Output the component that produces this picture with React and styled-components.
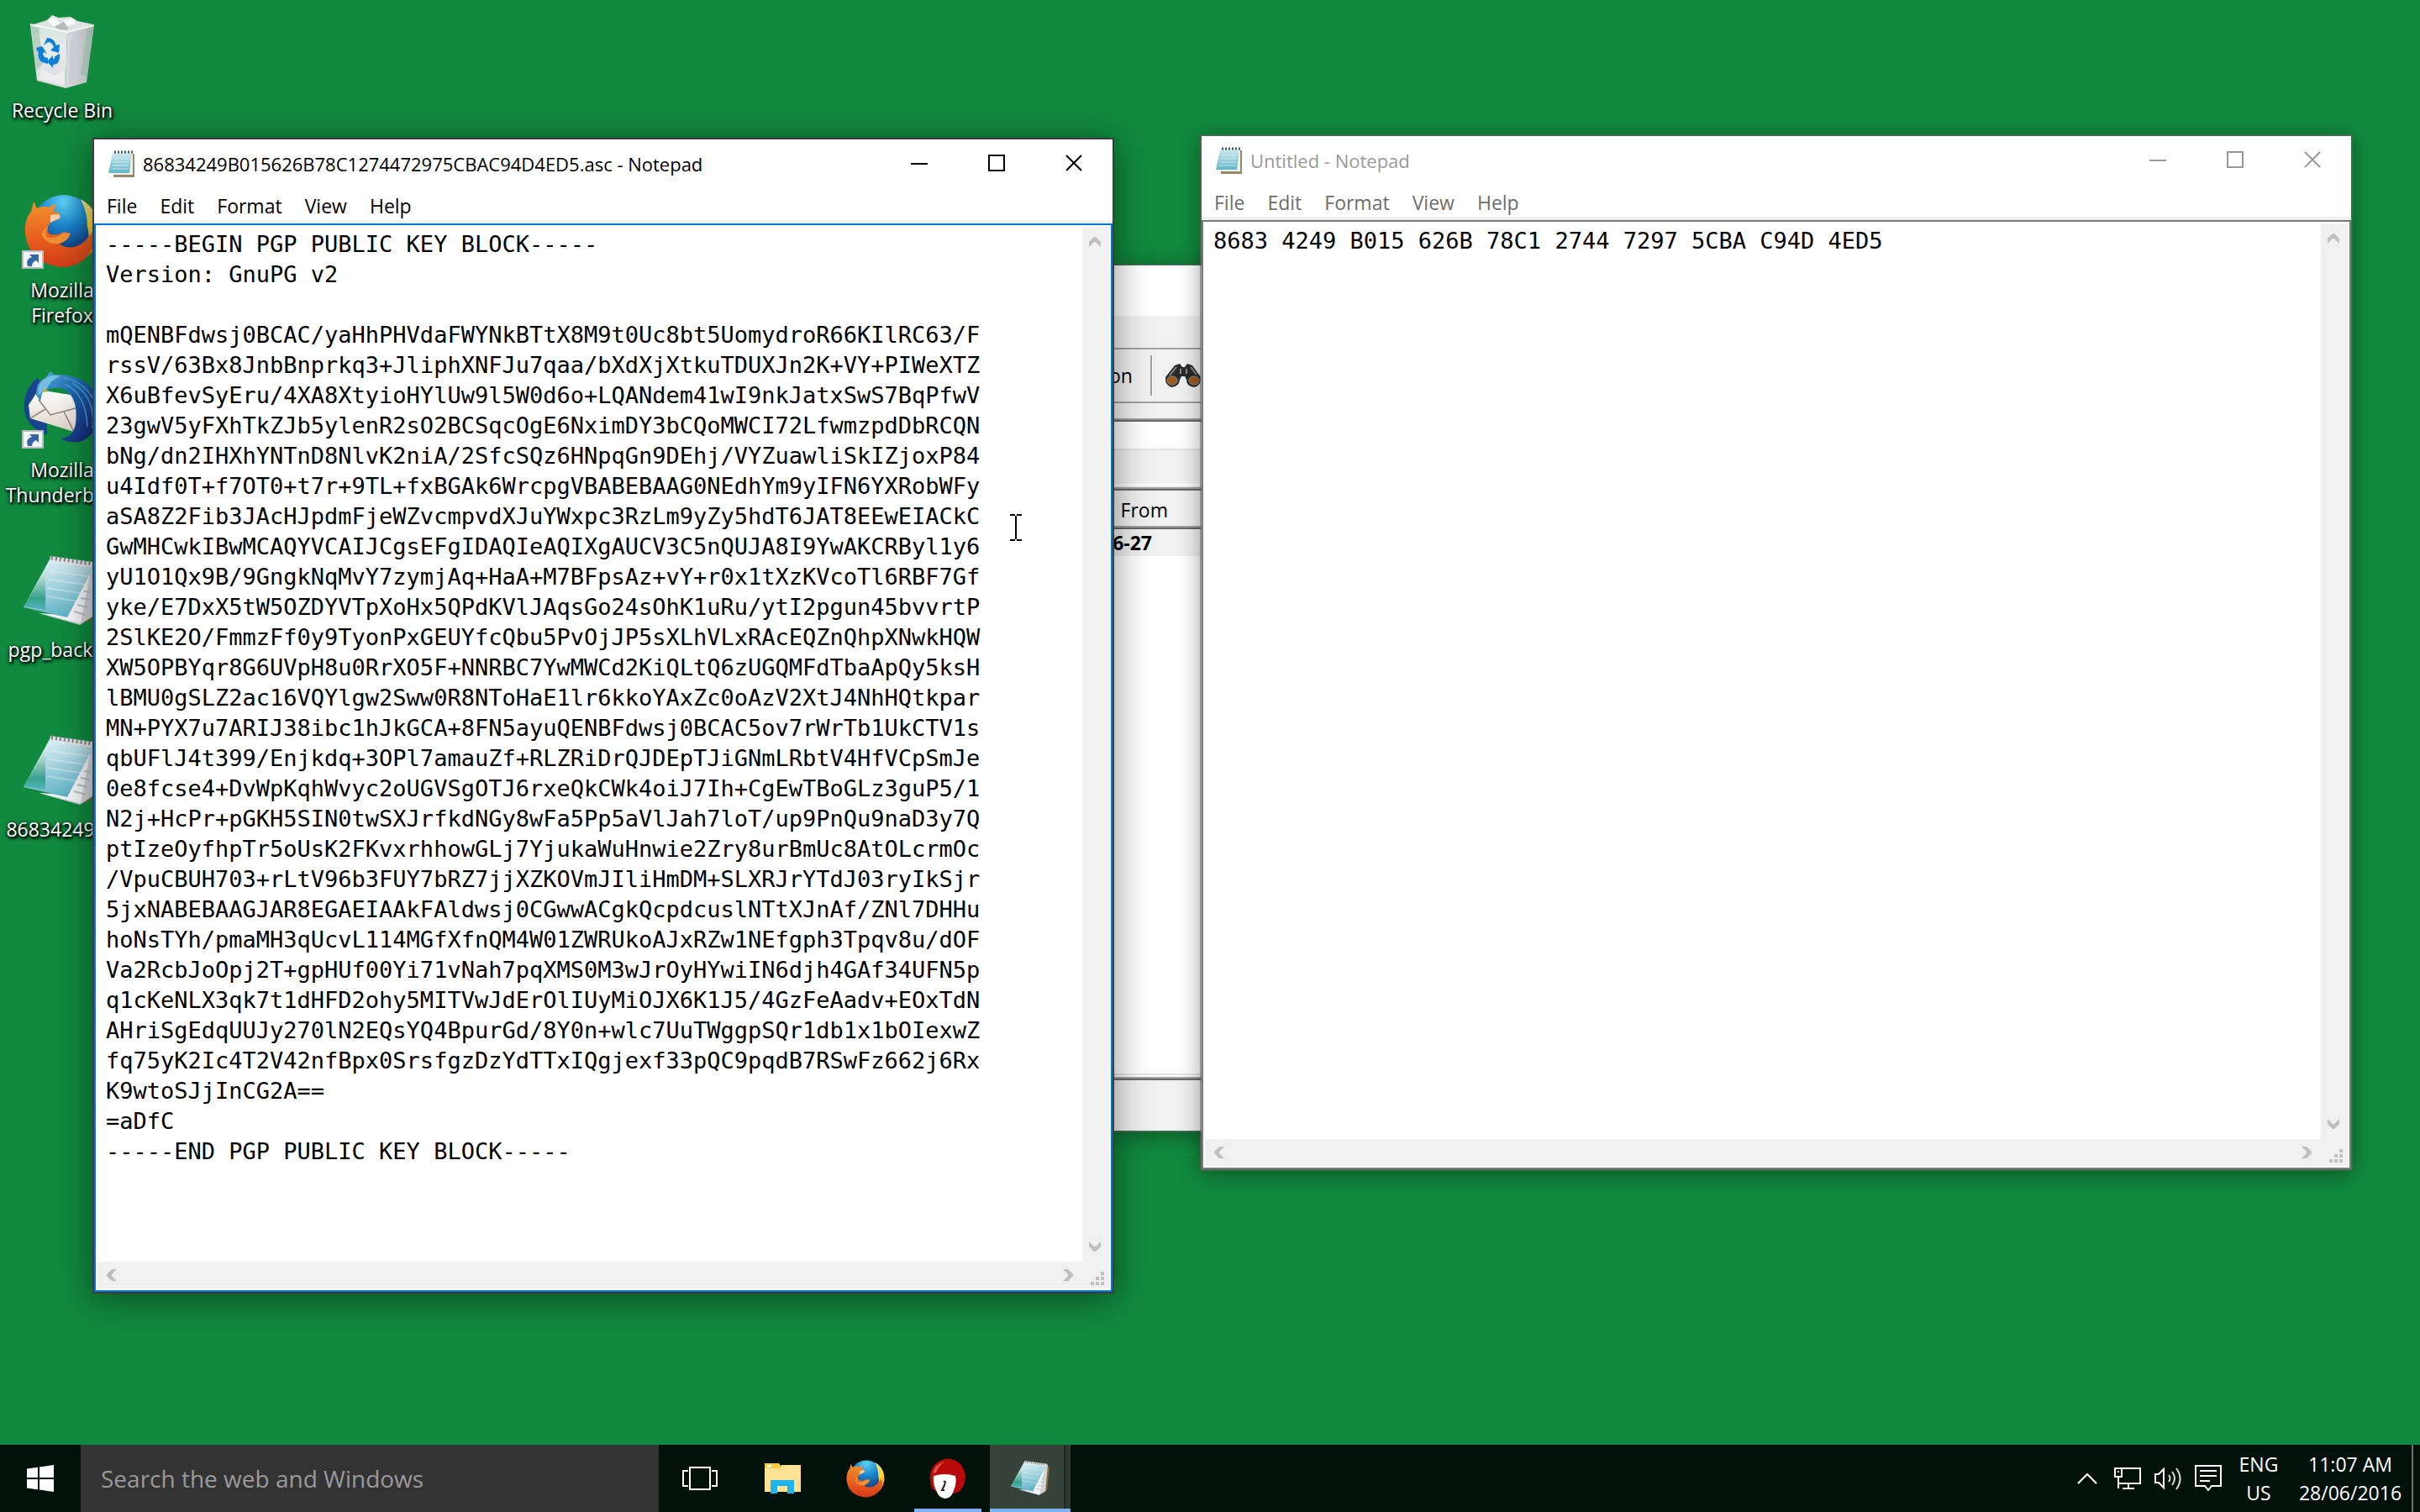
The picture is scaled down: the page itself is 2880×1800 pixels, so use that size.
import React from "react";
import styled, { createGlobalStyle, css } from "styled-components";

const ui = '"Open Sans", "Noto Sans", sans-serif';
const mono = '"DejaVu Sans Mono", "Liberation Mono", monospace';

const GlobalStyle = createGlobalStyle`
  *, *::before, *::after { box-sizing: border-box; }
  html, body { margin: 0; height: 100%; }
  body { font-family: ${ui}; font-size: 23px; color: #000; }
  button, input, textarea { font: inherit; color: inherit; margin: 0; border: 0; padding: 0; border-radius: 0; background: none; }
  button { display: flex; align-items: center; justify-content: center; cursor: default; }
  svg { display: block; flex: none; }
`;

const Screen = styled.div`
  display: flex;
  flex-direction: column;
  min-height: 100vh;
  background: #11893e;
`;

const Desktop = styled.main`
  position: relative;
  flex: 1;
  overflow: hidden;
`;

const IconColumn = styled.ul`
  display: grid;
  grid-auto-rows: 214px;
  width: 148px;
  margin: 0;
  padding: 14px 0 0;
  list-style: none;
`;

const ShortcutButton = styled.button`
  flex-direction: column;
  justify-content: flex-start;
  width: 100%;
  gap: 6px;
`;

const ShortcutLabel = styled.span`
  color: #fff;
  line-height: 30px;
  text-align: center;
  text-shadow: 2px 2px 3px #000, 0 2px 4px #000, 0 0 3px rgba(0, 0, 0, 0.6);
`;

/* ---------- windows ---------- */

const Frame = styled.section`
  position: absolute;
  left: ${(p) => p.$x}px;
  top: ${(p) => p.$y}px;
  width: ${(p) => p.$w}px;
  height: ${(p) => p.$h}px;
  display: flex;
  flex-direction: column;
  background: #fff;
  background-clip: padding-box;
  border: 2px solid ${(p) => (p.$active ? "#3c3c40" : "rgba(96, 96, 96, 0.6)")};
  box-shadow: ${(p) =>
    p.$active ? "0 6px 40px rgba(0, 0, 0, 0.45)" : "0 4px 24px rgba(0, 0, 0, 0.36)"};
`;

const TitleBar = styled.header`
  display: flex;
  align-items: center;
  height: 58px;
  padding-left: 16px;
  gap: 10px;
  color: ${(p) => (p.$active ? "#000" : "#999")};
`;

const Title = styled.h1`
  flex: 1;
  margin: 0;
  font-size: 22px;
  font-weight: 400;
  white-space: nowrap;
`;

const Caption = styled.div`
  display: flex;
  align-self: stretch;
`;

const CaptionButton = styled.button`
  width: 92px;
  height: 56px;
`;

const MenuBar = styled.nav`
  display: flex;
  align-items: center;
  height: 38px;
  padding-left: 2px;
  color: ${(p) => (p.$active ? "#000" : "#6d6d6d")};
`;

const MenuButton = styled.button`
  padding: 4px 14px 0 13px;
  height: 38px;
`;

const EditArea = styled.div`
  flex: 1;
  min-height: 0;
  display: grid;
  grid-template: 1fr 32px / 1fr 32px;
  margin-top: 4px;
  padding: 2px;
  border: 2px solid ${(p) => (p.$active ? "#0078d7" : "#7a7a7a")};
  box-shadow: 0 -4px 0 #f0f0f0;
`;

const TextBox = styled.textarea`
  display: block;
  width: 100%;
  height: 100%;
  padding: 3px 10px;
  resize: none;
  outline: none;
  overflow: hidden;
  white-space: pre;
  font-family: ${mono};
  font-size: 27px;
  line-height: 36px;
  color: #000;
`;

const ScrollBar = styled.div`
  display: flex;
  flex-direction: ${(p) => (p.$vertical ? "column" : "row")};
  justify-content: space-between;
  background: #f0f0f0;
`;

const ScrollButton = styled.button`
  ${(p) =>
    p.$vertical
      ? css`
          width: 30px;
          height: 36px;
        `
      : css`
          width: 34px;
          height: 32px;
        `}
`;

const Corner = styled.div`
  display: flex;
  align-items: flex-end;
  justify-content: flex-end;
  padding: 4px 6px;
  background: #f0f0f0;
`;

/* ---------- key manager window ---------- */

const Strip = styled.div`
  display: flex;
  align-items: center;
  justify-content: flex-end;
  height: ${(p) => p.$h}px;
  background: ${(p) => p.$bg || "#f0f0f0"};
  border-bottom: ${(p) => (p.$edge ? "2px solid " + p.$edge : "0")};
  font-size: 23px;
  font-weight: ${(p) => (p.$bold ? 700 : 400)};
  padding-top: ${(p) => p.$drop || 0}px;
  padding-right: ${(p) => p.$pad || 0}px;
`;

const Groove = styled.div`
  height: 4px;
  border-top: 2px solid #a0a0a0;
  border-bottom: 2px solid #696969;
`;

const Filler = styled.div`
  flex: 1;
  border-bottom: 2px solid #e3e3e3;
  margin-bottom: 2px;
`;

const Divider = styled.span`
  width: 4px;
  height: 48px;
  margin: 0 14px 0 21px;
  background: #fff;
  border-left: 2px solid #a0a0a0;
`;

const Pointer = styled.svg`
  position: absolute;
  left: 1202px;
  top: 612px;
`;

/* ---------- taskbar ---------- */

const TaskBar = styled.footer`
  display: flex;
  height: 80px;
  background: #02120a;
  color: #fff;
`;

const StartButton = styled.button`
  width: 96px;
`;

const SearchBox = styled.input`
  width: 688px;
  padding: 0 24px;
  background: #333;
  font-size: 28px;
  outline: none;
  &::placeholder {
    color: #9a9a9a;
    opacity: 1;
  }
`;

const TaskButton = styled.button`
  position: relative;
  width: ${(p) => (p.$view ? 98 : 96)}px;
  margin-right: 2px;
  background: ${(p) => (p.$active ? "linear-gradient(90deg, #36433b 88px, #1b2a21 88px, #1b2a21 90px, #2b3930 90px)" : "none")};
  ${(p) =>
    (p.$active || p.$running) &&
    css`
      &::after {
        content: "";
        position: absolute;
        bottom: 0;
        left: ${p.$active ? 0 : 8}px;
        right: ${p.$active ? 0 : 8}px;
        height: 4px;
        background: #7ab4f6;
      }
    `}
`;

const Tray = styled.div`
  display: flex;
  align-items: stretch;
  margin-left: auto;
`;

const TrayButton = styled.button`
  width: 48px;
`;

const TrayText = styled.button`
  flex-direction: column;
  width: ${(p) => p.$w}px;
  line-height: 34px;
`;

const ShowDesktop = styled.button`
  width: 10px;
  border-left: 2px solid #67716b;
`;

/* ---------- drawings ---------- */

const RecycleBinIcon = () => (
  <svg width="96" height="96" viewBox="0 -2 96 96">
    <defs>
      <linearGradient id="binL" x1="0" y1="0" x2="0" y2="1">
        <stop offset="0" stopColor="#d4e2da" />
        <stop offset=".4" stopColor="#e9ecee" />
        <stop offset="1" stopColor="#d7d9db" />
      </linearGradient>
      <linearGradient id="binR" x1="0" y1="0" x2="1" y2="0">
        <stop offset="0" stopColor="#d9dbde" />
        <stop offset="1" stopColor="#aeb4b6" />
      </linearGradient>
    </defs>
    <path d="M11 14 L30 8 L36 2 L44 5 L58 4 L66 9 L85 13 L54 22 Z" fill="#dfe2e3" />
    <path d="M30 8 L38 4 L46 12 L40 18 Z M50 8 L62 6 L64 12 L52 16 Z" fill="#f7f8f8" />
    <path d="M38 16 L50 10 L56 18 L48 22 Z" fill="#b6bcbc" />
    <path d="M10 13 L54 22 L52 89 L18 80 Z" fill="url(#binL)" />
    <path d="M54 22 L86 14 L77 82 L52 89 Z" fill="url(#binR)" />
    <path d="M11 15 L20 17 L25 60 L17 68 Z M85 15 L78 18 L70 72 L78 76 Z" fill="#8ab89c" opacity=".5" />
    <path d="M58 30 L72 44 L62 58 L70 74 L56 84 Z" fill="#c6cacd" opacity=".7" />
    <path d="M24 66 L38 74 L50 68 L51 86 L20 78 Z" fill="#f6f6f6" opacity=".6" />
    <path d="M10 13 L54 22 L86 14" fill="none" stroke="#f3f7f5" strokeWidth="2" />
    <path
      d="M26 38 L31 34 Q36 34 38 40 L34 44 L44 47 L45 37 L41 38 Q38 29 30 29 Z M24 39 L17 41 Q18 45 20 46 Q18 54 24 58 L31 60 V53 L27 52 Q24 49 26 46 L30 48 Z M45 48 L39 51 Q40 54 37 54 V50 L30 57 L37 65 V61 Q46 61 45 48 Z"
      fill="#0f7fd8"
    />
  </svg>
);

const FirefoxShape = ({ id }) => (
  <>
    <defs>
      <radialGradient id={id + "g"} cx=".5" cy=".1" r=".85">
        <stop offset="0" stopColor="#5fd0f5" />
        <stop offset=".45" stopColor="#1a86cc" />
        <stop offset="1" stopColor="#0b2c6b" />
      </radialGradient>
      <linearGradient id={id + "f"} x1="0" y1="0" x2="0" y2="1">
        <stop offset="0" stopColor="#f0932e" />
        <stop offset=".55" stopColor="#e8601f" />
        <stop offset="1" stopColor="#d23a17" />
      </linearGradient>
      <linearGradient id={id + "t"} x1="0" y1="0" x2="0" y2="1">
        <stop offset="0" stopColor="#e8e4a0" />
        <stop offset=".4" stopColor="#fbd32d" />
        <stop offset="1" stopColor="#ee7f22" />
      </linearGradient>
    </defs>
    <circle cx="50" cy="42" r="38" fill={`url(#${id}g)`} />
    <path d="M70 9 Q93 22 92 50 Q88 76 66 84 Q84 62 78 42 Q78 24 70 9Z" fill={`url(#${id}t)`} />
    <path
      d="M14 12 L18 20 Q26 16 32 19 L40 14 L38 24 L46 26 L44 33 L34 37 Q28 44 32 50 Q40 54 50 48 L58 50 Q54 60 44 62 Q58 72 74 60 L84 48 Q90 56 86 64 Q74 90 48 90 Q8 86 4 50 Q3 32 11 24 Z"
      fill={`url(#${id}f)`}
    />
    <path d="M34 37 L46 31 L44 27 L34 28 Z" fill="#f9d0ae" />
    <path d="M32 42 Q26 46 29 54 Q38 58 50 49 L58 50 Q54 60 44 62 Q30 64 24 52 Q24 44 32 42Z" fill="#f6a03c" opacity=".75" />
  </>
);

const Badge = () => (
  <g>
    <rect x="1" y="71" width="24" height="20" fill="#f2f5f7" stroke="#b9bdc2" strokeWidth="2" />
    <path d="M9 75 L20 75 L20 85 L17 82 Q12 84 12 89 L7 89 Q4 80 12 78 Z" fill="#3465a6" />
  </g>
);

const FirefoxIcon = ({ size = 96, id = "ffd", badge }) => (
  <svg width={size} height={size} viewBox={badge ? "0 0 96 96" : "2 -1 92 94"}>
    <FirefoxShape id={id} />
    {badge && <Badge />}
  </svg>
);

const ThunderbirdIcon = () => (
  <svg width="96" height="96" viewBox="0 0 96 96">
    <defs>
      <linearGradient id="tbB" x1="0" y1="0" x2="1" y2="1">
        <stop offset="0" stopColor="#5fb4dc" />
        <stop offset=".4" stopColor="#1f6cb4" />
        <stop offset="1" stopColor="#101a6a" />
      </linearGradient>
      <linearGradient id="tbE" x1="0" y1="0" x2="0" y2="1">
        <stop offset="0" stopColor="#fff" />
        <stop offset="1" stopColor="#ddd3c6" />
      </linearGradient>
    </defs>
    <path d="M18 8 Q0 24 3 48 Q8 68 30 76 L30 20 Z" fill="#17468f" />
    <path d="M8 40 L20 22 L70 30 L68 54 L62 72 L10 56 Z" fill="url(#tbE)" />
    <path d="M20 34 L34 52 L64 44 M10 56 L28 45 M50 48 L62 72" stroke="#8f867c" strokeWidth="1.5" fill="none" />
    <path
      d="M17 28 Q17 12 28 8 L34 0 L38 4 Q78 2 92 34 Q98 66 74 82 Q60 88 46 80 Q62 78 64 62 Q68 30 48 20 Q34 18 24 26 L22 36 Z"
      fill="url(#tbB)"
    />
    <path d="M24 12 Q34 2 46 6 Q34 10 30 20 L20 28 Q18 18 24 12Z" fill="#74bfdf" />
    <path d="M52 16 Q76 26 78 66 M60 14 Q88 30 84 68 M50 8 Q78 12 90 44" fill="none" stroke="#4b9ad6" strokeWidth="1.5" />
    <circle cx="28" cy="23" r="2" fill="#f0a030" />
    <Badge />
  </svg>
);

const NotepadLargeIcon = ({ size = 96, id }) => (
  <svg width={size} height={size} viewBox="0 0 96 96">
    <defs>
      <linearGradient id={id + "p"} x1=".2" y1="0" x2=".5" y2="1">
        <stop offset="0" stopColor="#e3f3f6" />
        <stop offset=".5" stopColor="#a3d2de" />
        <stop offset="1" stopColor="#5fb3c6" />
      </linearGradient>
      <linearGradient id={id + "g"} x1="0" y1="0" x2="0" y2="1">
        <stop offset="0" stopColor="#d8ece0" />
        <stop offset=".7" stopColor="#279a80" />
        <stop offset="1" stopColor="#4fb3ba" />
      </linearGradient>
    </defs>
    <path d="M86 14 L94 22 L88 76 L76 86 Z" fill="#8a6a35" />
    <path d="M84 12 L90 16 L84 78 L69 88 L20 74 L54 76 Z" fill="#cfd5d9" />
    <path d="M84 12 L70 86 L22 74 L54 78 Z" fill="#f5f6f7" />
    <path d="M33 10 L86 18 L54 79 L2 67 Z" fill={`url(#${id}p)`} />
    <path d="M28 24 L28 70 L2 66 Z" fill={`url(#${id}g)`} opacity=".85" />
    <path d="M34 24 L80 30 M32 34 L76 40 M30 44 L70 50 M30 54 L66 60" stroke="#fff" strokeWidth="2" opacity=".3" />
    <path d="M74 48 L82 49 M70 56 L80 58 M66 64 L78 67 M62 72 L76 76" stroke="#b9bec4" strokeWidth="2" />
    <path d="M34 6 L84 13 L83 20 L33 12 Z" fill="#e4e6e6" />
    <path d="M35 8 L84 15" stroke="#7b8383" strokeWidth="5" strokeDasharray="2 3" />
  </svg>
);

const NotepadSmallIcon = ({ id }) => (
  <svg width="32" height="32" viewBox="0 0 32 32">
    <defs>
      <linearGradient id={id} x1="0" y1="0" x2="0" y2="1">
        <stop offset="0" stopColor="#cfe9ee" />
        <stop offset="1" stopColor="#63b4c6" />
      </linearGradient>
    </defs>
    <path d="M28 4 H32 V32 H7 V29 H28 Z" fill="#978967" />
    <path d="M8 3 H30 V29 H8 Z" fill="#eef0ee" />
    <path d="M6 3 H29 L26 27 H1 Z" fill={`url(#${id})`} />
    <path d="M8 10 H26 M7 14 H25 M6 18 H25 M5 22 H24" stroke="#e6f6f8" strokeWidth="1" opacity=".7" />
    <path d="M8 2 H30" stroke="#3d5960" strokeWidth="3" strokeDasharray="2 2" />
  </svg>
);

const MinimizeGlyph = () => (
  <svg width="20" height="20" viewBox="0 0 20 20">
    <rect y="10" width="20" height="2" fill="currentColor" />
  </svg>
);
const MaximizeGlyph = () => (
  <svg width="20" height="20" viewBox="0 0 20 20">
    <rect x="1" y="1" width="18" height="18" fill="none" stroke="currentColor" strokeWidth="2" />
  </svg>
);
const CloseGlyph = () => (
  <svg width="20" height="20" viewBox="0 0 20 20">
    <path d="M1 1 L19 19 M19 1 L1 19" stroke="currentColor" strokeWidth="2" />
  </svg>
);

const arrows = {
  up: [14, 12, "M0 12 V6 L6 0 H8 L14 6 V12 L8 6 H6 Z"],
  down: [14, 12, "M0 0 V6 L6 12 H8 L14 6 V0 L8 6 H6 Z"],
  left: [12, 14, "M12 0 H6 L0 6 V8 L6 14 H12 L6 8 V6 Z"],
  right: [12, 14, "M0 0 H6 L12 6 V8 L6 14 H0 L6 8 V6 Z"],
};
const Arrow = ({ dir }) => {
  const [w, h, d] = arrows[dir];
  return (
    <svg width={w} height={h} viewBox={`0 0 ${w} ${h}`} fill="#bfbfbf">
      <path d={d} />
    </svg>
  );
};

const Grip = () => (
  <svg width="16" height="16" viewBox="0 0 16 16" fill="#bfbfbf">
    <path d="M12 0h4v4h-4z M6 6h4v4h-4z M12 6h4v4h-4z M0 12h4v4h-4z M6 12h4v4h-4z M12 12h4v4h-4z" />
  </svg>
);

const BinocularsIcon = () => (
  <svg width="44" height="28" viewBox="0 0 44 28">
    <path d="M12 2 L18 0 L21 4 H24 L27 0 L33 2 L43 16 Q44 26 35 28 Q26 27 26 19 L24 15 H20 L18 19 Q17 27 9 28 Q0 26 1 16 Z" fill="#2a2a2a" />
    <path d="M14 4 L6 14 M31 4 L38 13 M19 6 V12 M26 6 V12" stroke="#8a8a8a" strokeWidth="2" />
    <ellipse cx="9" cy="20" rx="6" ry="5" fill="#a55a14" stroke="#777" strokeWidth="1.5" />
    <ellipse cx="35" cy="20" rx="6" ry="5" fill="#a55a14" stroke="#777" strokeWidth="1.5" />
  </svg>
);

const WindowsLogo = () => (
  <svg width="32" height="32" viewBox="0 0 32 32" fill="#fff">
    <path d="M0 4.5 L13 2.7 V15 H0 Z M15 2.4 L32 0 V15 H15 Z M0 17 H13 V29.3 L0 27.5 Z M15 17 H32 V32 L15 29.6 Z" />
  </svg>
);

const TaskViewIcon = () => (
  <svg width="42" height="28" viewBox="0 0 42 28" fill="none" stroke="#fff" strokeWidth="2">
    <rect x="9" y="1" width="24" height="26" />
    <path d="M7 5 H1 V23 H7 M35 5 H41 V23 H35" />
  </svg>
);

const FolderIcon = () => (
  <svg width="44" height="36" viewBox="0 0 44 36">
    <path d="M0 0 H17 L20 4 H43 V34 H0 Z" fill="#f6c945" />
    <path d="M0 6 H18 L20 2 H43 V34 H0 Z" fill="#fde293" />
    <rect x="3" y="2" width="5" height="3" fill="#fff" />
    <path d="M7 20 H35 V36 H27 V27 H15 V36 H7 Z" fill="#1eb5ee" />
  </svg>
);

const KeyManagerIcon = () => (
  <svg width="46" height="48" viewBox="0 0 46 48">
    <path d="M4 36 Q-2 18 8 7 Q23 -6 38 7 Q48 20 41 34 Q36 43 27 42 L10 40 Z" fill="#b80a0a" />
    <path d="M5 18 Q8 6 20 4 Q12 8 9 17 Z" fill="#d9574e" />
    <path d="M6 21 Q20 17 32 21 Q34 30 30 38 Q28 47 20 48 Q12 47 10 40 Q5 32 6 21 Z" fill="#fff" />
    <path d="M18 28 Q21 26 19 32 L16 38 H19" fill="none" stroke="#222" strokeWidth="2" />
  </svg>
);

const ChevronUpIcon = () => (
  <svg width="24" height="14" viewBox="0 0 24 14" fill="none" stroke="#fff" strokeWidth="2">
    <path d="M1 13 L12 2 L23 13" />
  </svg>
);
const NetworkIcon = () => (
  <svg width="32" height="26" viewBox="0 0 32 26" fill="none" stroke="#fff" strokeWidth="2">
    <path d="M10 1 H31 V19 H5 M17 19 V25 M10 25 H24 M5 11 V25" />
    <rect x="1" y="1" width="8" height="10" />
    <path d="M4 5 H6" />
  </svg>
);
const SpeakerIcon = () => (
  <svg width="32" height="28" viewBox="0 0 32 28" fill="none" stroke="#fff" strokeWidth="2">
    <path d="M1 9 H5 L11 3 V25 L5 19 H1 Z" />
    <path d="M17 10 Q20 14 17 18 M21 6 Q27 14 21 22 M26 2 Q35 14 26 27" opacity=".85" />
  </svg>
);
const ActionCenterIcon = () => (
  <svg width="32" height="32" viewBox="0 0 32 32" fill="none" stroke="#fff" strokeWidth="2">
    <path d="M1 1 H31 V25 H20 L16 30 L12 25 H1 Z M6 7 H26 M6 13 H26 M6 19 H18" />
  </svg>
);

/* ---------- content ---------- */

const keyText = `-----BEGIN PGP PUBLIC KEY BLOCK-----
Version: GnuPG v2

mQENBFdwsj0BCAC/yaHhPHVdaFWYNkBTtX8M9t0Uc8bt5UomydroR66KIlRC63/F
rssV/63Bx8JnbBnprkq3+JliphXNFJu7qaa/bXdXjXtkuTDUXJn2K+VY+PIWeXTZ
X6uBfevSyEru/4XA8XtyioHYlUw9l5W0d6o+LQANdem41wI9nkJatxSwS7BqPfwV
23gwV5yFXhTkZJb5ylenR2sO2BCSqcOgE6NximDY3bCQoMWCI72LfwmzpdDbRCQN
bNg/dn2IHXhYNTnD8NlvK2niA/2SfcSQz6HNpqGn9DEhj/VYZuawliSkIZjoxP84
u4Idf0T+f7OT0+t7r+9TL+fxBGAk6WrcpgVBABEBAAG0NEdhYm9yIFN6YXRobWFy
aSA8Z2Fib3JAcHJpdmFjeWZvcmpvdXJuYWxpc3RzLm9yZy5hdT6JAT8EEwEIACkC
GwMHCwkIBwMCAQYVCAIJCgsEFgIDAQIeAQIXgAUCV3C5nQUJA8I9YwAKCRByl1y6
yU1O1Qx9B/9GngkNqMvY7zymjAq+HaA+M7BFpsAz+vY+r0x1tXzKVcoTl6RBF7Gf
yke/E7DxX5tW5OZDYVTpXoHx5QPdKVlJAqsGo24sOhK1uRu/ytI2pgun45bvvrtP
2SlKE2O/FmmzFf0y9TyonPxGEUYfcQbu5PvOjJP5sXLhVLxRAcEQZnQhpXNwkHQW
XW5OPBYqr8G6UVpH8u0RrXO5F+NNRBC7YwMWCd2KiQLtQ6zUGQMFdTbaApQy5ksH
lBMU0gSLZ2ac16VQYlgw2Sww0R8NToHaE1lr6kkoYAxZc0oAzV2XtJ4NhHQtkpar
MN+PYX7u7ARIJ38ibc1hJkGCA+8FN5ayuQENBFdwsj0BCAC5ov7rWrTb1UkCTV1s
qbUFlJ4t399/Enjkdq+3OPl7amauZf+RLZRiDrQJDEpTJiGNmLRbtV4HfVCpSmJe
0e8fcse4+DvWpKqhWvyc2oUGVSgOTJ6rxeQkCWk4oiJ7Ih+CgEwTBoGLz3guP5/1
N2j+HcPr+pGKH5SIN0twSXJrfkdNGy8wFa5Pp5aVlJah7loT/up9PnQu9naD3y7Q
ptIzeOyfhpTr5oUsK2FKvxrhhowGLj7YjukaWuHnwie2Zry8urBmUc8AtOLcrmOc
/VpuCBUH703+rLtV96b3FUY7bRZ7jjXZKOVmJIliHmDM+SLXRJrYTdJ03ryIkSjr
5jxNABEBAAGJAR8EGAEIAAkFAldwsj0CGwwACgkQcpdcuslNTtXJnAf/ZNl7DHHu
hoNsTYh/pmaMH3qUcvL114MGfXfnQM4W01ZWRUkoAJxRZw1NEfgph3Tpqv8u/dOF
Va2RcbJoOpj2T+gpHUf00Yi71vNah7pqXMS0M3wJrOyHYwiIN6djh4GAf34UFN5p
q1cKeNLX3qk7t1dHFD2ohy5MITVwJdErOlIUyMiOJX6K1J5/4GzFeAadv+EOxTdN
AHriSgEdqUUJy270lN2EQsYQ4BpurGd/8Y0n+wlc7UuTWggpSQr1db1x1bOIexwZ
fq75yK2Ic4T2V42nfBpx0SrsfgzDzYdTTxIQgjexf33pQC9pqdB7RSwFz662j6Rx
K9wtoSJjInCG2A==
=aDfC
-----END PGP PUBLIC KEY BLOCK-----`;

const shortcuts = [
  { label: ["Recycle Bin"], icon: <RecycleBinIcon /> },
  { label: ["Mozilla", "Firefox"], icon: <FirefoxIcon badge /> },
  { label: ["Mozilla", "Thunderbird"], icon: <ThunderbirdIcon /> },
  { label: ["pgp_backup"], icon: <NotepadLargeIcon id="np1" /> },
  { label: ["86834249B0"], icon: <NotepadLargeIcon id="np2" /> },
];

const menus = ["File", "Edit", "Format", "View", "Help"];

function Notepad({ title, text, active, x, y, w, h, id }) {
  return (
    <Frame $x={x} $y={y} $w={w} $h={h} $active={active}>
      <TitleBar $active={active}>
        <NotepadSmallIcon id={id} />
        <Title>{title}</Title>
        <Caption>
          <CaptionButton aria-label="Minimize"><MinimizeGlyph /></CaptionButton>
          <CaptionButton aria-label="Maximize"><MaximizeGlyph /></CaptionButton>
          <CaptionButton aria-label="Close"><CloseGlyph /></CaptionButton>
        </Caption>
      </TitleBar>
      <MenuBar $active={active}>
        {menus.map((m) => (
          <MenuButton key={m}>{m}</MenuButton>
        ))}
      </MenuBar>
      <EditArea $active={active}>
        <TextBox aria-label={title} defaultValue={text} spellCheck={false} wrap="off" />
        <ScrollBar $vertical>
          <ScrollButton $vertical aria-label="Scroll up"><Arrow dir="up" /></ScrollButton>
          <ScrollButton $vertical aria-label="Scroll down"><Arrow dir="down" /></ScrollButton>
        </ScrollBar>
        <ScrollBar>
          <ScrollButton aria-label="Scroll left"><Arrow dir="left" /></ScrollButton>
          <ScrollButton aria-label="Scroll right"><Arrow dir="right" /></ScrollButton>
        </ScrollBar>
        <Corner><Grip /></Corner>
      </EditArea>
    </Frame>
  );
}

function KeyManager() {
  return (
    <Frame $x={1318} $y={314} $w={200} $h={1034}>
      <Strip $h={60} $bg="#fff" />
      <Strip $h={40} $edge="#a0a0a0" />
      <Strip $h={64} $edge="#a0a0a0" $pad={86}>
        on
        <Divider />
        <BinocularsIcon />
      </Strip>
      <Strip $h={18} />
      <Groove />
      <Strip $h={34} $bg="#fff" $edge="#e3e3e3" />
      <Strip $h={42} $edge="#fff" />
      <Strip $h={2} />
      <Groove />
      <Strip $h={42} $pad={126} $drop={4}>From</Strip>
      <Groove />
      <Strip $h={32} $bold $pad={145}>6-27</Strip>
      <Filler />
      <Groove />
      <Strip $h={60} />
    </Frame>
  );
}

export default function App() {
  return (
    <Screen>
      <GlobalStyle />
      <Desktop>
        <IconColumn>
          {shortcuts.map((s) => (
            <li key={s.label.join(" ")}>
              <ShortcutButton>
                {s.icon}
                <ShortcutLabel>
                  {s.label[0]}
                  {s.label[1] && <br />}
                  {s.label[1]}
                </ShortcutLabel>
              </ShortcutButton>
            </li>
          ))}
        </IconColumn>
        <KeyManager />
        <Notepad id="ns2" title="Untitled - Notepad" text="8683 4249 B015 626B 78C1 2744 7297 5CBA C94D 4ED5" x={1428} y={160} w={1372} h={1234} />
        <Notepad id="ns1" active title="86834249B015626B78C1274472975CBAC94D4ED5.asc - Notepad" text={keyText} x={110} y={164} w={1216} h={1376} />
        <Pointer width="14" height="32" viewBox="0 0 14 32" fill="none" stroke="#000" strokeWidth="2">
          <path d="M0 1 H6 M8 1 H14 M7 2 V30 M0 31 H6 M8 31 H14" />
        </Pointer>
      </Desktop>
      <TaskBar>
        <StartButton aria-label="Start"><WindowsLogo /></StartButton>
        <SearchBox aria-label="Search" placeholder="Search the web and Windows" />
        <TaskButton $view aria-label="Task View"><TaskViewIcon /></TaskButton>
        <TaskButton aria-label="File Explorer"><FolderIcon /></TaskButton>
        <TaskButton aria-label="Firefox"><FirefoxIcon size={48} id="fft" /></TaskButton>
        <TaskButton $running aria-label="Key manager"><KeyManagerIcon /></TaskButton>
        <TaskButton $active aria-label="Notepad"><NotepadLargeIcon size={48} id="npt" /></TaskButton>
        <Tray>
          <TrayButton aria-label="Show hidden icons"><ChevronUpIcon /></TrayButton>
          <TrayButton aria-label="Network"><NetworkIcon /></TrayButton>
          <TrayButton aria-label="Volume"><SpeakerIcon /></TrayButton>
          <TrayButton aria-label="Action Center"><ActionCenterIcon /></TrayButton>
          <TrayText $w={72}><span>ENG</span><span>US</span></TrayText>
          <TrayText $w={146}><span>11:07 AM</span><span>28/06/2016</span></TrayText>
          <ShowDesktop aria-label="Show desktop" />
        </Tray>
      </TaskBar>
    </Screen>
  );
}
